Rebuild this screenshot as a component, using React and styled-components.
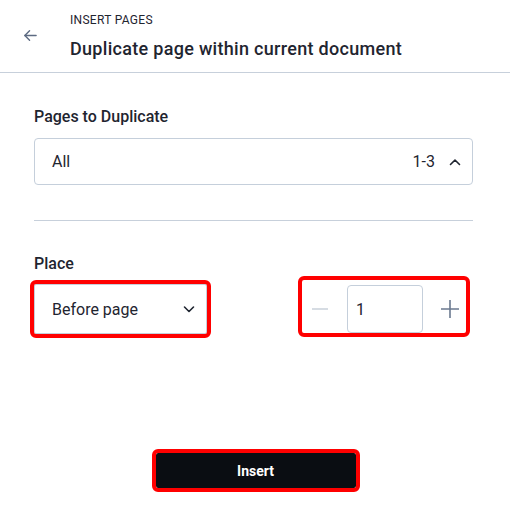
import React, { useState } from 'react';
import styled, { createGlobalStyle, css } from 'styled-components';

const GlobalStyle = createGlobalStyle`
  html, body {
    margin: 0;
    padding: 0;
    background: #ffffff;
  }
  body {
    font-family: Roboto, "Liberation Sans", Arial, sans-serif;
    color: #1f2530;
  }
  * { box-sizing: border-box; }
`;

const highlight = css`
  outline: 4px solid #ff0000;
  outline-offset: 0;
  border-radius: 2px;
`;

const Panel = styled.div`
  width: 510px;
  height: 524px;
  background: #fff;
  display: flex;
  flex-direction: column;
`;

const Header = styled.header`
  height: 73px;
  border-bottom: 1px solid #c7d0db;
  display: grid;
  grid-template-columns: 70px 1fr;
  align-items: center;
`;

const BackButton = styled.button`
  width: 20px;
  height: 20px;
  padding: 0;
  margin-left: 20px;
  margin-top: -1px;
  border: none;
  background: none;
  color: #5d6b82;
  display: flex;
  align-items: center;
  justify-content: center;
  cursor: pointer;
`;

const HeaderText = styled.div`
  display: flex;
  flex-direction: column;
  padding-top: 1px;
`;

const Overline = styled.span`
  font-size: 12px;
  line-height: 14px;
  text-transform: uppercase;
  color: #1f2530;
  letter-spacing: 0.3px;
`;

const Title = styled.h1`
  margin: 11px 0 0;
  font-size: 18px;
  line-height: 22px;
  font-weight: 500;
  color: #1f2530;
  letter-spacing: 0.3px;
`;

const Body = styled.section`
  padding: 34px 37px 0 34px;
  display: flex;
  flex-direction: column;
`;

const Label = styled.label`
  margin-top: ${p => p.$top || 0}px;
  font-size: 16px;
  line-height: 20px;
  font-weight: 500;
  color: #1f2530;
`;

const Select = styled.div`
  height: ${p => p.$height}px;
  width: ${p => (p.$width ? `${p.$width}px` : '100%')};
  margin-top: ${p => p.$top || 0}px;
  border: 1px solid #c5cfdb;
  border-radius: 4px;
  background: #fff;
  padding: 0 10px 0 17px;
  display: flex;
  align-items: center;
  font-size: 16px;
  color: #1f2530;
  cursor: pointer;
  ${p => p.$highlight && highlight}
`;

const SelectValue = styled.span`
  flex: 1;
`;

const SelectHint = styled.span`
  margin-right: 13px;
  color: #1f2530;
`;

const Divider = styled.hr`
  margin: 35px 0 0;
  border: none;
  border-top: 1px solid #c7d0db;
`;

const PlaceRow = styled.div`
  margin-top: 6px;
  display: flex;
  justify-content: space-between;
  align-items: flex-start;
`;

const Stepper = styled.div`
  width: 164px;
  height: 53px;
  margin-right: 7px;
  padding: 5px 6px 0 8px;
  display: flex;
  align-items: center;
  justify-content: space-between;
  ${p => p.$highlight && highlight}
`;

const StepButton = styled.button`
  width: 20px;
  height: 20px;
  padding: 0;
  border: none;
  background: none;
  color: ${p => (p.disabled ? '#c9d0da' : '#6b7a90')};
  display: flex;
  align-items: center;
  justify-content: center;
`;

const CountInput = styled.input`
  width: 76px;
  height: 48px;
  border: 1px solid #c5cfdb;
  border-radius: 4px;
  padding: 0 8px;
  font-family: inherit;
  font-size: 16px;
  color: #1f2530;
  outline: none;
`;

const Footer = styled.div`
  margin-top: 119px;
  display: flex;
  justify-content: center;
`;

const PrimaryButton = styled.button`
  width: 200px;
  height: 35px;
  margin-left: 1px;
  border: none;
  background: #0a0d12;
  color: #ffffff;
  font-family: inherit;
  font-size: 14px;
  font-weight: 700;
  cursor: pointer;
  ${p => p.$highlight && highlight}
`;

const ArrowLeft = () => (
  <svg width="15" height="15" viewBox="0 0 16 16" fill="none" stroke="currentColor" strokeWidth="1.5" strokeLinecap="round" strokeLinejoin="round">
    <path d="M14 8H2" />
    <path d="M7 3L2 8l5 5" />
  </svg>
);

const Chevron = ({ up }) => (
  <svg width="14" height="14" viewBox="0 0 14 14" fill="none" stroke="#1f2530" strokeWidth="1.6" strokeLinecap="round" strokeLinejoin="round">
    {up ? <path d="M2.5 9.5L7 5l4.5 4.5" /> : <path d="M2.5 5L7 9.5 11.5 5" />}
  </svg>
);

const Minus = () => (
  <svg width="18" height="18" viewBox="0 0 18 18" stroke="currentColor" strokeWidth="1.5">
    <path d="M1 9h16" />
  </svg>
);

const Plus = () => (
  <svg width="20" height="20" viewBox="0 0 20 20" stroke="currentColor" strokeWidth="1.6">
    <path d="M1 10h18M10 1v18" />
  </svg>
);

export default function App() {
  const [count, setCount] = useState(1);

  return (
    <>
      <GlobalStyle />
      <Panel>
        <Header>
          <BackButton aria-label="Back">
            <ArrowLeft />
          </BackButton>
          <HeaderText>
            <Overline>Insert Pages</Overline>
            <Title>Duplicate page within current document</Title>
          </HeaderText>
        </Header>

        <Body>
          <Label>Pages to Duplicate</Label>
          <Select $height={47} $top={11}>
            <SelectValue>All</SelectValue>
            <SelectHint>1-3</SelectHint>
            <Chevron up />
          </Select>

          <Divider />

          <Label $top={33}>Place</Label>
          <PlaceRow>
            <Select $height={50} $width={173} $top={4} $highlight>
              <SelectValue>Before page</SelectValue>
              <Chevron />
            </Select>
            <Stepper $highlight>
              <StepButton disabled={count <= 1} onClick={() => setCount(c => Math.max(1, c - 1))}>
                <Minus />
              </StepButton>
              <CountInput value={count} onChange={e => setCount(Number(e.target.value) || 1)} />
              <StepButton onClick={() => setCount(c => c + 1)}>
                <Plus />
              </StepButton>
            </Stepper>
          </PlaceRow>
        </Body>

        <Footer>
          <PrimaryButton $highlight>Insert</PrimaryButton>
        </Footer>
      </Panel>
    </>
  );
}
